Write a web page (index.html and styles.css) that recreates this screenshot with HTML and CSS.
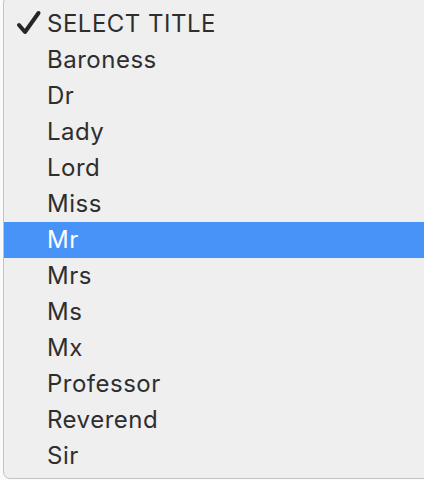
FILE: index.html
```html
<!DOCTYPE html>
<html lang="en">
<head>
    <meta charset="UTF-8">
    <meta name="viewport" content="width=device-width, initial-scale=1.0">
    <title>Select Title</title>
    <link rel="stylesheet" href="styles.css">
</head>
<body>

<div class="menu">
    <ul class="options">
        <li class="option selected">
            <svg class="check" width="28" height="28" viewBox="0 0 28 28">
                <path d="M4 15 L10 22 L23.5 3" fill="none" stroke="currentColor" stroke-width="4" stroke-linecap="round" stroke-linejoin="round"/>
            </svg>
            SELECT TITLE
        </li>
        <li class="option">Baroness</li>
        <li class="option">Dr</li>
        <li class="option">Lady</li>
        <li class="option">Lord</li>
        <li class="option">Miss</li>
        <li class="option active">Mr</li>
        <li class="option">Mrs</li>
        <li class="option">Ms</li>
        <li class="option">Mx</li>
        <li class="option">Professor</li>
        <li class="option">Reverend</li>
        <li class="option">Sir</li>
    </ul>
</div>

</body>
</html>
```

FILE: styles.css
```css
body {
    margin: 0;
    background-color: #fafafa;
    font-family: Inter, 'Noto Sans', sans-serif;
    overflow: hidden;
    height: 480px;
}
.menu {
    margin: -4px -8px 0 3px;
    padding: 9px 0 4px 0;
    background-color: #efefef;
    border: 1px solid #c4c4c4;
    border-radius: 7px;
}
.options {
    list-style: none;
    margin: 0;
    padding: 0;
}
.option {
    position: relative;
    height: 36px;
    line-height: 35px;
    padding-left: 43px;
    font-size: 24px;
    letter-spacing: 0.5px;
    color: #2e2e2e;
}
.option.active {
    background-color: #4793f8;
    color: white;
}
.check {
    position: absolute;
    left: 11px;
    top: 4px;
    color: #262626;
}
```
